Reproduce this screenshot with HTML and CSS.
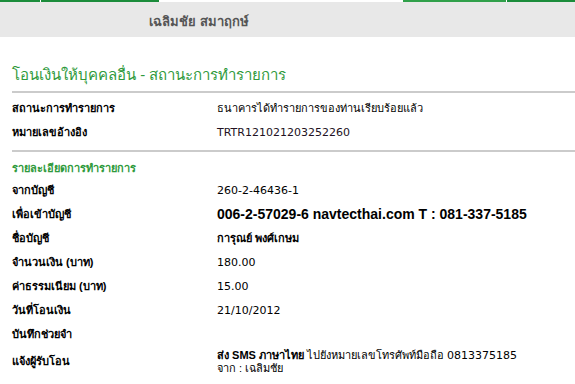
FILE: index.html
```html
<!DOCTYPE html>
<html lang="th">
<head>
  <meta charset="UTF-8" />
  <title>โอนเงินให้บุคคลอื่น - สถานะการทำรายการ</title>
  <link rel="stylesheet" href="styles.css">
</head>
<body>
  <div class="tabs">
    <span class="tab t1"></span>
    <span class="tab t2"></span>
    <span class="tab gap"></span>
    <span class="tab t3"></span>
    <span class="tab t4"></span>
  </div>
  <div class="userbar">
    <span class="username">เฉลิมชัย สมาฤกษ์</span>
  </div>

  <div class="content">
    <h1 class="title">โอนเงินให้บุคคลอื่น - สถานะการทำรายการ</h1>
    <hr class="rule">

    <table class="info">
      <tr><th>สถานะการทำรายการ</th><td class="thai">ธนาคารได้ทำรายการของท่านเรียบร้อยแล้ว</td></tr>
      <tr><th>หมายเลขอ้างอิง</th><td class="num ref">TRTR121021203252260</td></tr>
    </table>
    <hr class="rule">

    <h2 class="subtitle">รายละเอียดการทำรายการ</h2>
    <table class="info">
      <tr><th>จากบัญชี</th><td class="num">260-2-46436-1</td></tr>
      <tr><th>เพื่อเข้าบัญชี</th><td class="big">006-2-57029-6 navtecthai.com T : 081-337-5185</td></tr>
      <tr><th>ชื่อบัญชี</th><td class="thai strong">การุณย์ พงศ์เกษม</td></tr>
      <tr><th>จำนวนเงิน (บาท)</th><td class="num">180.00</td></tr>
      <tr><th>ค่าธรรมเนียม (บาท)</th><td class="num">15.00</td></tr>
      <tr><th>วันที่โอนเงิน</th><td class="num">21/10/2012</td></tr>
      <tr><th>บันทึกช่วยจำ</th><td></td></tr>
      <tr class="notify">
        <th>แจ้งผู้รับโอน</th>
        <td class="thai"><b>ส่ง SMS ภาษาไทย</b> ไปยังหมายเลขโทรศัพท์มือถือ <span class="num">0813375185</span><br>จาก : เฉลิมชัย</td>
      </tr>
    </table>
  </div>
</body>
</html>
```

FILE: styles.css
```css
body {
  margin: 0;
  font-family: "Liberation Sans", Tahoma, sans-serif;
  font-size: 12px;
  color: #000;
  background: #fff;
}

/* top tab strips */
.tabs {
  display: flex;
  height: 2px;
}

.tab {
  display: block;
  height: 2px;
}

.t1 { width: 40px; background: #1b8c3b; margin-right: 1px; }
.t2 { width: 118px; background: #1b8c3b; }
.gap { width: 244px; background: #fff; }
.t3 { width: 103px; background: #30a04a; margin-right: 1px; }
.t4 { flex: 1; background: #1b8c3b; }

.userbar {
  height: 35px;
  background: #e8e8e8;
  display: flex;
  align-items: center;
  padding-left: 149px;
}

.username {
  font-weight: bold;
  font-size: 13px;
  color: #555;
  margin-top: 4px;
}

.content {
  padding-left: 12px;
}

.title {
  margin: 28px 0 0;
  font-size: 15px;
  font-weight: normal;
  line-height: 20px;
  color: #2f9a3c;
}

.rule {
  border: none;
  height: 2px;
  background: #cbcbcb;
  margin: 6px 0 3px;
}

.info {
  border-collapse: collapse;
}

.info th {
  text-align: left;
  font-weight: bold;
  font-size: 11px;
  width: 205px;
  padding: 0;
  height: 24px;
}

.info td {
  padding: 0;
  height: 24px;
}

.info .thai {
  font-size: 11px;
}

/* numbers look closer to the original with a Verdana-like face */
.info .num {
  font-family: "DejaVu Sans", Tahoma, sans-serif;
  font-size: 11px;
}

.info .ref {
  color: #221122;
}

.info .big {
  font-size: 14px;
  font-weight: bold;
}

.info .strong {
  font-weight: bold;
}

.notify th,
.notify td {
  height: 27px;
  line-height: 13px;
  padding-top: 2px;
}

.subtitle {
  margin: 6px 0 0;
  font-size: 11px;
  line-height: 20px;
  font-weight: bold;
  color: #2f9a3c;
}
```
